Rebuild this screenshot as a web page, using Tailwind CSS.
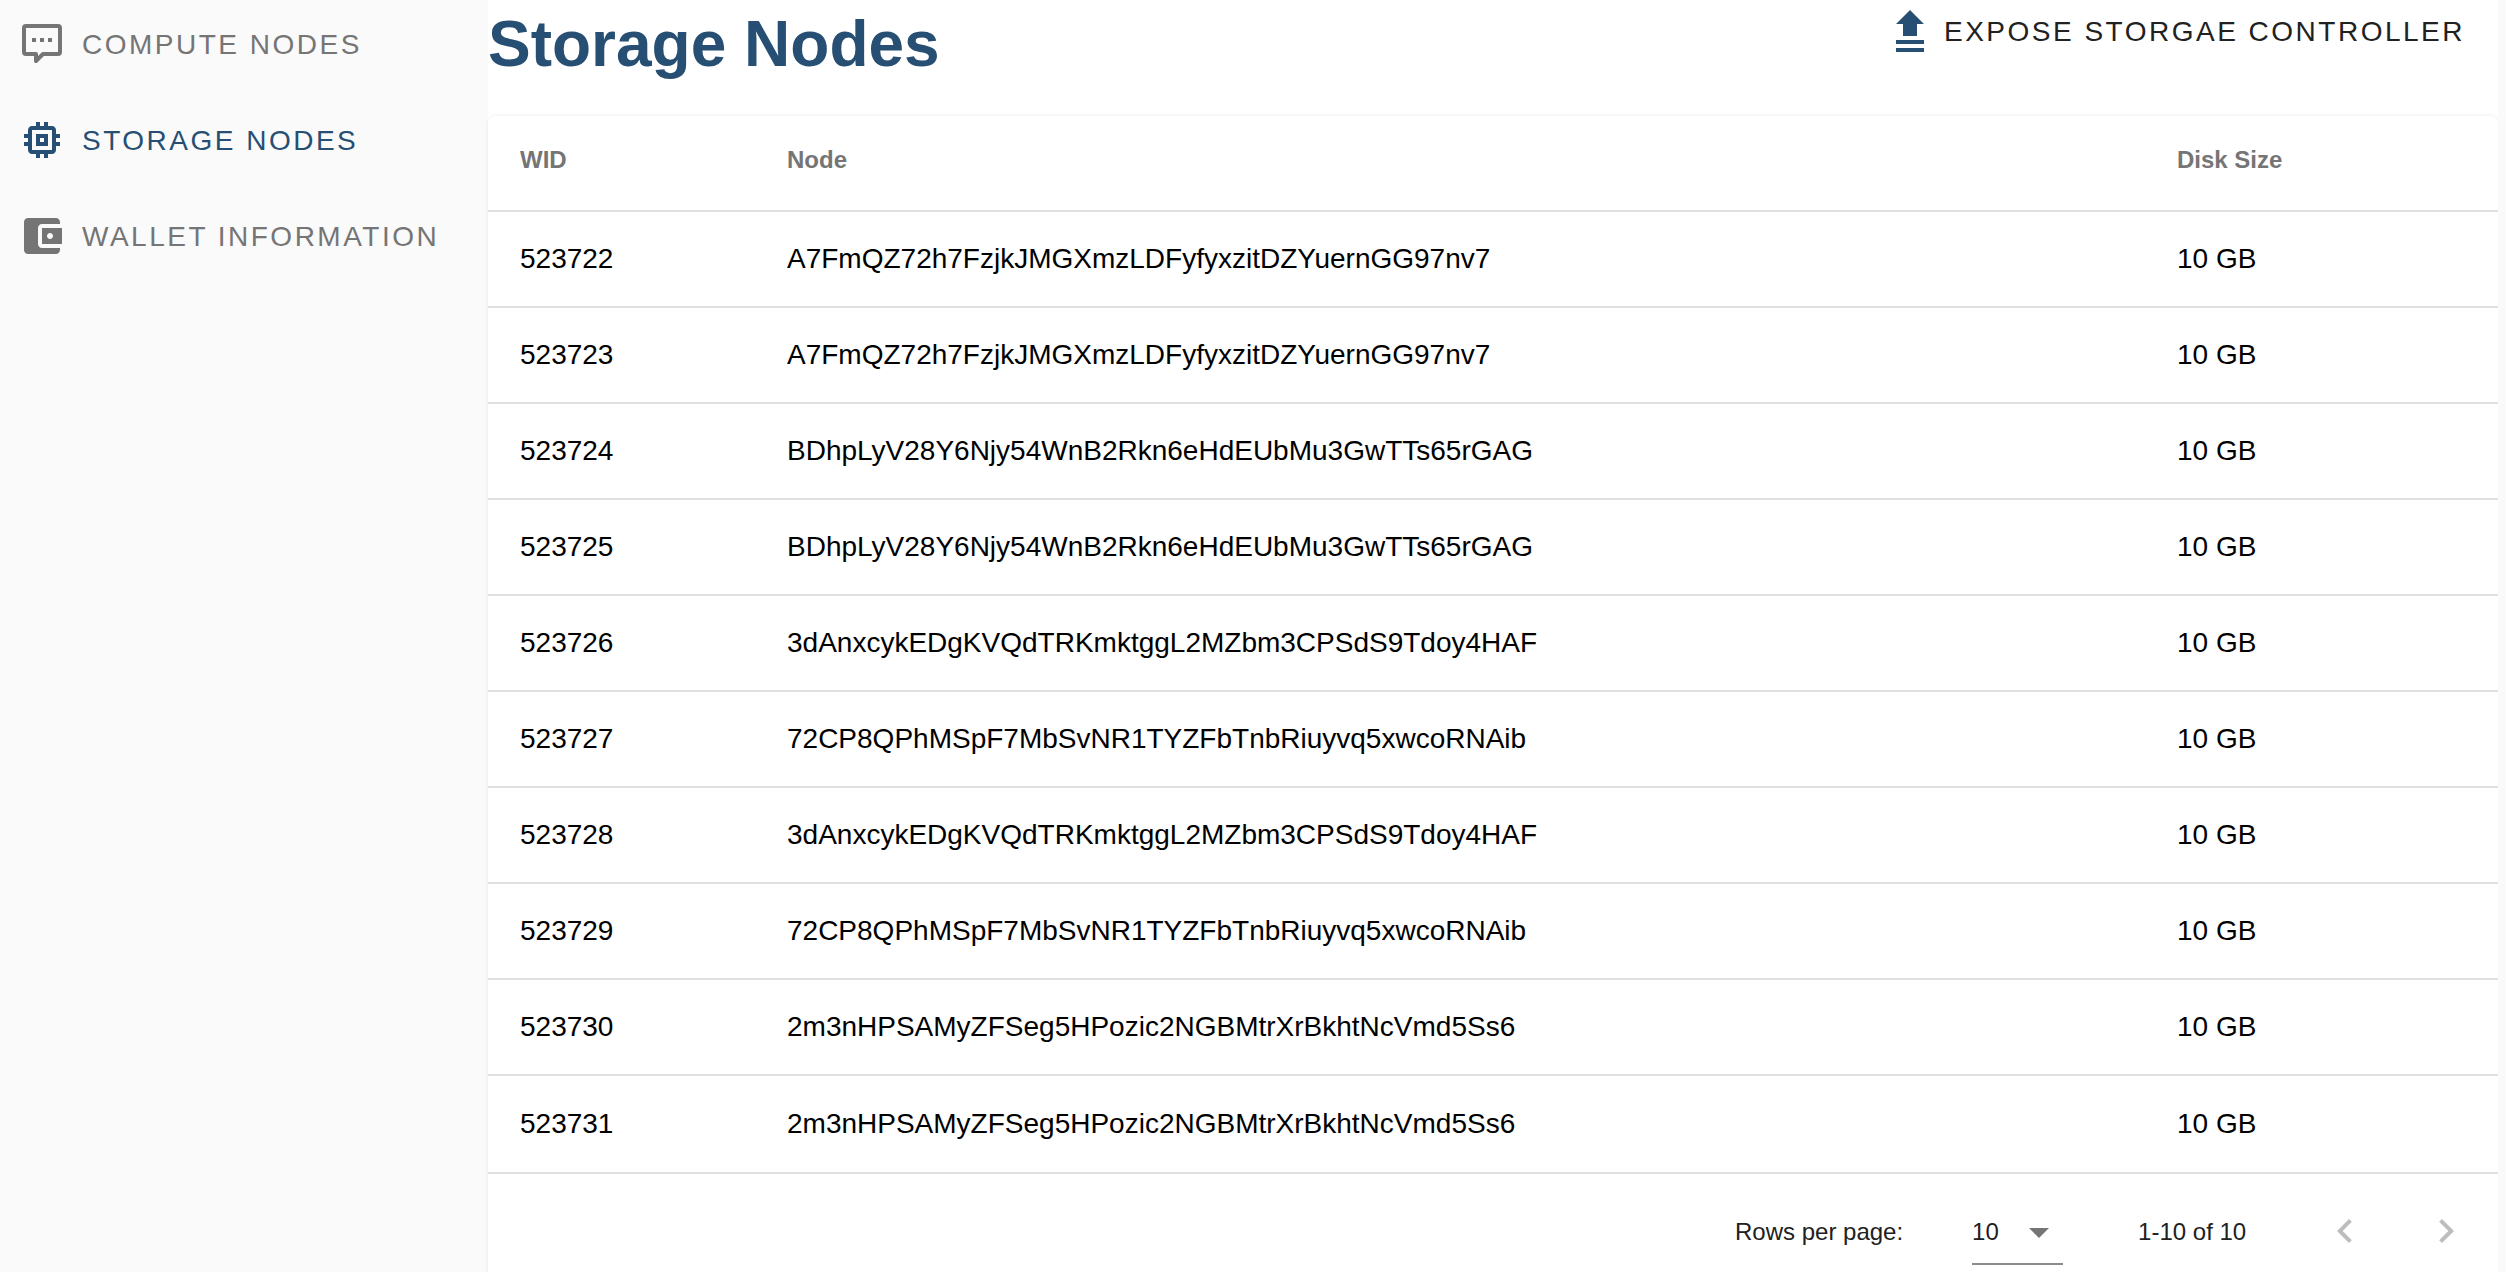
<!DOCTYPE html>
<html>
<head>
<meta charset="utf-8">
<script src="https://cdn.jsdelivr.net/npm/@tailwindcss/browser@4"></script>
</head>
<body class="font-['Liberation_Sans',Arial,sans-serif] bg-[#fafafa]">
<div class="flex h-screen overflow-hidden">

  <!-- sidebar -->
  <aside class="w-[488px] shrink-0 bg-[#fafafa]">
    <nav class="flex flex-col text-[28px] tracking-[2.5px]">
      <a class="flex items-center h-[96px] -mt-[4px] pl-[18px] gap-[16px] text-[#757575]">
        <svg class="w-[48px] h-[48px]" viewBox="0 0 24 24">
          <path d="M4 3h16a1 1 0 0 1 1 1v12a1 1 0 0 1-1 1h-7.5L9 20.5V17H4a1 1 0 0 1-1-1V4a1 1 0 0 1 1-1z" fill="none" stroke="#757575" stroke-width="2" stroke-linejoin="round"/>
          <path d="M7 9h2v2H7zm4 0h2v2h-2zm4 0h2v2h-2z" fill="#757575"/>
        </svg>
        <span class="mt-[2px]">COMPUTE NODES</span>
      </a>
      <a class="flex items-center h-[96px] pl-[18px] gap-[16px] text-[#264f73]">
        <svg class="w-[48px] h-[48px]" viewBox="0 0 24 24" fill="#264f73">
          <path d="M15 9H9v6h6V9zm-2 4h-2v-2h2v2zm8-2V9h-2V7c0-1.1-.9-2-2-2h-2V3h-2v2h-2V3H9v2H7c-1.1 0-2 .9-2 2v2H3v2h2v2H3v2h2v2c0 1.1.9 2 2 2h2v2h2v-2h2v2h2v-2h2c1.1 0 2-.9 2-2v-2h2v-2h-2v-2h2zm-4 6H7V7h10v10z"/>
        </svg>
        <span class="mt-[2px]">STORAGE NODES</span>
      </a>
      <a class="flex items-center h-[96px] pl-[18px] gap-[16px] text-[#757575]">
        <svg class="w-[48px] h-[48px]" viewBox="0 0 24 24" fill="#757575">
          <path d="M21 18v1c0 1.1-.9 2-2 2H5c-1.11 0-2-.9-2-2V5c0-1.1.89-2 2-2h14c1.1 0 2 .9 2 2v1h-9c-1.11 0-2 .9-2 2v8c0 1.1.89 2 2 2h9zm-9-2h10V8H12v8zm4-2.5c-.83 0-1.5-.67-1.5-1.5s.67-1.5 1.5-1.5 1.5.67 1.5 1.5-.67 1.5-1.5 1.5z"/>
        </svg>
        <span class="mt-[2px]">WALLET INFORMATION</span>
      </a>
    </nav>
  </aside>

  <!-- main -->
  <main class="flex-1 min-w-0 bg-white">
    <header class="flex justify-between h-[116px]">
      <h1 class="text-[64px] leading-[88px] font-bold text-[#264f73]">Storage Nodes</h1>
      <button class="flex items-start h-[56px] mt-[10px] mr-[33px] gap-[20px] text-[28px] tracking-[2.5px] text-[#212121]">
        <svg class="w-[28px] h-[42px]" viewBox="0 0 28 42" fill="#264f73">
          <path d="M14 0l14 14h-7v12H7V14H0zM0 30h28v4H0zM0 38h28v4H0z"/>
        </svg>
        <span class="leading-[44px]">EXPOSE STORGAE CONTROLLER</span>
      </button>
    </header>

    <section class="bg-white rounded-t-lg shadow-[0_0_4px_rgba(0,0,0,0.08)]">
      <table class="w-full table-fixed border-collapse text-[28px] text-black">
        <thead>
          <tr class="h-[95px] border-b-2 border-[#e0e0e0] text-[24px] font-bold text-[#757575] text-left">
            <th class="w-[299px] pl-[32px] pb-[6px]">WID</th>
            <th class="pb-[6px]">Node</th>
            <th class="w-[321px] pb-[6px]">Disk Size</th>
          </tr>
        </thead>
        <tbody>
          <tr class="h-[96px] border-b-2 border-[#e0e0e0]"><td class="pl-[32px]">523722</td><td>A7FmQZ72h7FzjkJMGXmzLDFyfyxzitDZYuernGG97nv7</td><td>10 GB</td></tr>
          <tr class="h-[96px] border-b-2 border-[#e0e0e0]"><td class="pl-[32px]">523723</td><td>A7FmQZ72h7FzjkJMGXmzLDFyfyxzitDZYuernGG97nv7</td><td>10 GB</td></tr>
          <tr class="h-[96px] border-b-2 border-[#e0e0e0]"><td class="pl-[32px]">523724</td><td>BDhpLyV28Y6Njy54WnB2Rkn6eHdEUbMu3GwTTs65rGAG</td><td>10 GB</td></tr>
          <tr class="h-[96px] border-b-2 border-[#e0e0e0]"><td class="pl-[32px]">523725</td><td>BDhpLyV28Y6Njy54WnB2Rkn6eHdEUbMu3GwTTs65rGAG</td><td>10 GB</td></tr>
          <tr class="h-[96px] border-b-2 border-[#e0e0e0]"><td class="pl-[32px]">523726</td><td>3dAnxcykEDgKVQdTRKmktggL2MZbm3CPSdS9Tdoy4HAF</td><td>10 GB</td></tr>
          <tr class="h-[96px] border-b-2 border-[#e0e0e0]"><td class="pl-[32px]">523727</td><td>72CP8QPhMSpF7MbSvNR1TYZFbTnbRiuyvq5xwcoRNAib</td><td>10 GB</td></tr>
          <tr class="h-[96px] border-b-2 border-[#e0e0e0]"><td class="pl-[32px]">523728</td><td>3dAnxcykEDgKVQdTRKmktggL2MZbm3CPSdS9Tdoy4HAF</td><td>10 GB</td></tr>
          <tr class="h-[96px] border-b-2 border-[#e0e0e0]"><td class="pl-[32px]">523729</td><td>72CP8QPhMSpF7MbSvNR1TYZFbTnbRiuyvq5xwcoRNAib</td><td>10 GB</td></tr>
          <tr class="h-[96px] border-b-2 border-[#e0e0e0]"><td class="pl-[32px]">523730</td><td>2m3nHPSAMyZFSeg5HPozic2NGBMtrXrBkhtNcVmd5Ss6</td><td>10 GB</td></tr>
          <tr class="h-[98px] border-b-2 border-[#e0e0e0]"><td class="pl-[32px]">523731</td><td>2m3nHPSAMyZFSeg5HPozic2NGBMtrXrBkhtNcVmd5Ss6</td><td>10 GB</td></tr>
        </tbody>
      </table>

      <footer class="relative h-[104px] flex items-center text-[24px] text-[#212121]">
        <span class="ml-[1247px] mt-[12px]">Rows per page:</span>
        <div class="relative ml-[69px] w-[91px] h-[64px] border-b-2 border-[#8c8c8c] flex items-center mt-[14px]">
          <span>10</span>
          <svg class="absolute left-[57px] top-[27px] w-[20px] h-[10px]" viewBox="0 0 20 10" fill="#757575"><path d="M0 0h20L10 10z"/></svg>
        </div>
        <span class="ml-[75px] mt-[12px]">1-10 of 10</span>
        <svg class="absolute left-[1833px] top-[33px] w-[48px] h-[48px]" viewBox="0 0 24 24" fill="#bdbdbd"><path d="M15.41 7.41 14 6l-6 6 6 6 1.41-1.41L10.83 12z"/></svg>
        <svg class="absolute left-[1934px] top-[33px] w-[48px] h-[48px]" viewBox="0 0 24 24" fill="#bdbdbd"><path d="M10 6 8.59 7.41 13.17 12l-4.58 4.58L10 18l6-6z"/></svg>
      </footer>
    </section>
  </main>
  <div class="w-[8px] shrink-0 bg-[#fafafa]"></div>
</div>
</body>
</html>
